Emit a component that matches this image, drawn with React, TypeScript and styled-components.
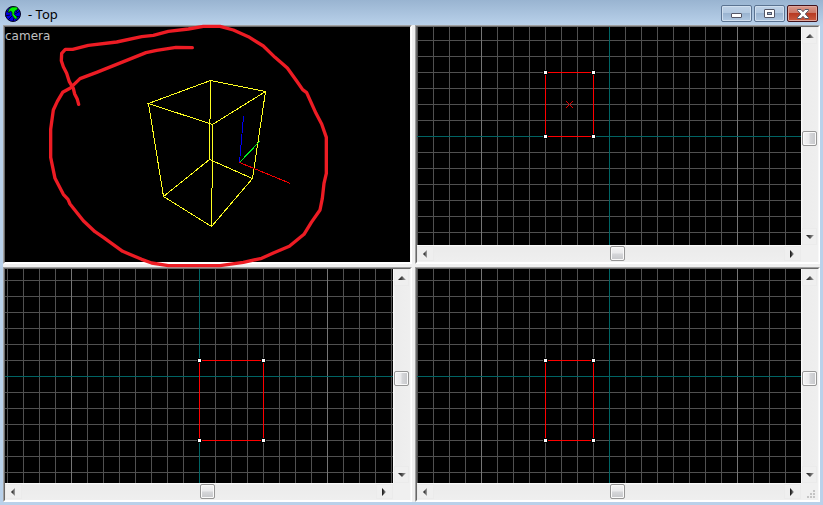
import React from "react";
import styled, { createGlobalStyle, css } from "styled-components";

const GlobalStyle = createGlobalStyle`
  html, body { margin: 0; background: #b9d1ea; }
  * { box-sizing: border-box; }
`;

const Window = styled.main`
  position: relative;
  display: flex;
  flex-direction: column;
  height: 100vh;
  padding: 0 3px 3px;
  overflow: hidden;
  background: linear-gradient(#99b4d1 0, #b9d1ea 25px, #b9d1ea 100%);
  font-family: "Noto Sans", "Open Sans", sans-serif;
`;

const TitleBar = styled.header`
  display: flex;
  align-items: center;
  flex: none;
  height: 25px;
  padding: 2px 2px 0;
`;

const Title = styled.h1`
  flex: 1;
  margin: 0 0 0 7px;
  font-size: 13px;
  font-weight: 400;
  line-height: 20px;
  color: #000;
`;

const CaptionButtons = styled.div`
  display: flex;
  gap: 2px;
`;

const CaptionButton = styled.button<{ $close?: boolean }>`
  display: flex;
  align-items: center;
  justify-content: center;
  width: 31px;
  height: 17px;
  padding: 0;
  border: 1px solid ${(p) => (p.$close ? "#43131b" : "#5b7391")};
  border-radius: 2px;
  box-shadow: inset 0 0 0 1px ${(p) => (p.$close ? "#e0a79c" : "#d0dfef")};
  background: ${(p) =>
    p.$close
      ? "linear-gradient(#d99a8c 0, #cb7766 45%, #b83a22 50%, #c95b40 100%)"
      : "linear-gradient(#bfd2e7 0, #b3c9e1 45%, #9ab4d0 50%, #b0c8e2 100%)"};
`;

const Workspace = styled.div`
  display: grid;
  flex: 1;
  min-height: 0;
  grid-template-columns: 409fr 405fr;
  grid-template-rows: 239fr 235fr;
  gap: 3px;
  background: #f0f0f0;
`;

const Panel = styled.section`
  display: flex;
  min-width: 0;
  min-height: 0;
  border: 1px solid;
  border-color: #a0a0a0 #fff #fff #a0a0a0;
`;

const PanelInner = styled.div`
  flex: 1;
  min-width: 0;
  border: 1px solid;
  border-color: #696969 #f8f8f8 #fff #696969;
  background: #f0f0f0;
`;

const CameraInner = styled(PanelInner)`
  position: relative;
  background: #000;
`;

const CameraLabel = styled.h2`
  position: absolute;
  top: 2px;
  left: 0;
  margin: 0;
  font: 400 12px/15px "DejaVu Sans", sans-serif;
  color: #c0c0c0;
`;

const ScrollInner = styled(PanelInner)`
  display: grid;
  grid-template-columns: 1fr 17px;
  grid-template-rows: 1fr 17px;
`;

const Drawing = styled.svg`
  display: block;
  width: 100%;
  height: 100%;
  min-width: 0;
  min-height: 0;
  overflow: hidden;
  background: #000;
`;

const Bar = styled.div<{ $vertical?: boolean }>`
  display: flex;
  min-width: 0;
  min-height: 0;
  ${(p) =>
    p.$vertical
      ? css`
          flex-direction: column;
          padding: 0 1px 0 1px;
          background: linear-gradient(90deg, #fff 0, #ececec 2px, #efefef 100%);
        `
      : css`
          padding: 1px 0;
          background: linear-gradient(#fff 0, #ebebeb 2px, #efefef 100%);
        `}
`;

const Arrow = styled.button<{ $vertical?: boolean }>`
  display: flex;
  align-items: center;
  justify-content: center;
  flex: none;
  width: ${(p) => (p.$vertical ? "100%" : "17px")};
  height: ${(p) => (p.$vertical ? "17px" : "100%")};
  padding: ${(p) => (p.$vertical ? "0 0 0 1px" : "0 1px 0 0")};
  border: 1px solid #ebebeb;
  background: #efefef;
`;

const Track = styled.div<{ $grow: number }>`
  flex: ${(p) => p.$grow} 1 0;
`;

const Thumb = styled.div<{ $vertical?: boolean }>`
  flex: none;
  width: ${(p) => (p.$vertical ? "100%" : "15px")};
  height: 15px;
  border: 1px solid #969696;
  border-radius: 2px;
  box-shadow: inset 0 0 0 1px #fafafa;
  background: linear-gradient(
    ${(p) => (p.$vertical ? "90deg" : "180deg")},
    #f4f4f4 0,
    #e9e9eb 48%,
    #d6d7da 52%,
    #c6c7ca 100%
  );
`;

const Corner = styled.div`
  display: flex;
  align-items: flex-end;
  justify-content: flex-end;
  padding: 0 3px 2px 0;
`;

type Direction = "up" | "down" | "left" | "right";

const arrowPaths: Record<Direction, string> = {
  up: "M0 4 L4 0 L8 4Z",
  down: "M0 0 H8 L4 4Z",
  left: "M4 0 V8 L0 4Z",
  right: "M0 0 L4 4 L0 8Z",
};

function ArrowIcon({ direction }: { direction: Direction }) {
  const upright = direction === "up" || direction === "down";
  const id = React.useId();
  return (
    <svg width={upright ? 8 : 4} height={upright ? 4 : 8} aria-hidden="true">
      <linearGradient id={id}>
        <stop offset="0" stopColor="#151515" />
        <stop offset="0.4" stopColor="#404040" />
        <stop offset="1" stopColor="#a8a8a8" />
      </linearGradient>
      <path d={arrowPaths[direction]} fill={`url(#${id})`} />
    </svg>
  );
}

function ScrollBar({ vertical, before, label }: { vertical?: boolean; before: number; label: string }) {
  return (
    <Bar
      $vertical={vertical}
      role="scrollbar"
      aria-label={label}
      aria-orientation={vertical ? "vertical" : "horizontal"}
      aria-valuenow={before / 10}
    >
      <Arrow $vertical={vertical} aria-label={vertical ? "Scroll up" : "Scroll left"}>
        <ArrowIcon direction={vertical ? "up" : "left"} />
      </Arrow>
      <Track $grow={before} />
      <Thumb $vertical={vertical} />
      <Track $grow={1000 - before} />
      <Arrow $vertical={vertical} aria-label={vertical ? "Scroll down" : "Scroll right"}>
        <ArrowIcon direction={vertical ? "down" : "right"} />
      </Arrow>
    </Bar>
  );
}

interface ViewProps {
  name: string;
  originX: number;
  originY: number;
  box: { x: number; y: number; width: number; height: number };
  center?: boolean;
  grip?: boolean;
}

function GridView({ name, originX, originY, box, center, grip }: ViewProps) {
  const id = React.useId();
  const corners = [
    [box.x, box.y],
    [box.x + box.width, box.y],
    [box.x, box.y + box.height],
    [box.x + box.width, box.y + box.height],
  ];
  const cx = box.x + box.width / 2;
  const cy = box.y + box.height / 2;
  return (
    <Panel aria-label={name}>
      <ScrollInner>
        <Drawing shapeRendering="crispEdges" role="img" aria-label={`${name} grid`}>
          <defs>
            <pattern id={`${id}m`} x={originX} y={originY} width="16" height="16" patternUnits="userSpaceOnUse">
              <path d="M0 0H16V1H1V16H0Z" fill="#505050" />
            </pattern>
            <pattern id={`${id}b`} x={originX} y={originY} width="128" height="128" patternUnits="userSpaceOnUse">
              <path d="M0 0H128V1H1V128H0Z" fill="#757575" />
            </pattern>
          </defs>
          <rect width="100%" height="100%" fill={`url(#${id}m)`} />
          <rect width="100%" height="100%" fill={`url(#${id}b)`} />
          <rect x={originX} width="1" height="100%" fill="#006464" />
          <rect y={originY} width="100%" height="1" fill="#006464" />
          <g transform="translate(0.5 0.5)">
            <rect {...box} fill="none" stroke="#f00" />
            {center && (
              <path
                d={`M${cx - 3} ${cy - 3}l6 6M${cx + 3} ${cy - 3}l-6 6`}
                stroke="#e00000"
                strokeLinecap="square"
              />
            )}
          </g>
          {corners.map(([x, y]) => (
            <g key={`${x}-${y}`}>
              <rect x={x - 2} y={y - 2} width="5" height="5" fill="#000" />
              <rect x={x - 1} y={y - 1} width="3" height="3" fill="#fff" />
            </g>
          ))}
        </Drawing>
        <ScrollBar vertical before={515} label={`${name} vertical`} />
        <ScrollBar before={525} label={`${name} horizontal`} />
        <Corner>
          {grip && (
            <svg width="8" height="8" aria-hidden="true">
              <path d="M6 0h2v2H6zM3 3h2v2H3zM6 3h2v2H6zM0 6h2v2H0zM3 6h2v2H3zM6 6h2v2H6z" fill="#c4c4c4" />
            </svg>
          )}
        </Corner>
      </ScrollInner>
    </Panel>
  );
}

function CameraView() {
  return (
    <Panel aria-label="Camera">
      <CameraInner>
        <CameraLabel>camera</CameraLabel>
        <Drawing shapeRendering="crispEdges" fill="none" role="img" aria-label="Wireframe box">
          <g transform="translate(0.5 0.5)">
            <path
              stroke="#ffff20"
              d="M143 76L205 53L260 64L207 97ZL158 169L206 199L247 151L260 64M205 53L204 132L158 169M204 132L247 151M207 97V123L206 199"
            />
            <path stroke="#0000f0" d="M234 135L238 89" />
            <path stroke="#00f020" d="M234 135L254 114" />
            <path stroke="#f00000" d="M234 135L285 156" />
          </g>
        </Drawing>
      </CameraInner>
    </Panel>
  );
}

const Scribble = styled.svg`
  position: absolute;
  top: 20px;
  left: 40px;
  pointer-events: none;
`;

function Annotation() {
  return (
    <Scribble width="300" height="250" viewBox="0 0 900 750" aria-hidden="true">
      <polyline
        fill="none"
        stroke="#ed1c24"
        strokeWidth="10"
        strokeLinecap="round"
        strokeLinejoin="round"
        points="116,253 112,238 104,222 100,205 88,185 80,160 70,140 64,122 65,100 76,88 98,88 145,76 230,66 305,50 340,46 385,34 445,27 490,19 540,19 580,30 625,50 670,78 705,112 742,144 770,183 788,209 800,218 828,280 845,312 859,352 859,460 852,490 847,535 840,570 814,607 792,643 748,679 700,699 665,715 610,727 540,737 385,737 335,729 305,718 248,694 190,652 165,635 130,602 90,552 84,538 70,523 45,475 32,412 32,328 40,270 52,244 68,217 90,205 120,176 170,157 318,98 350,91 408,82 457,83"
      />
    </Scribble>
  );
}

function AppIcon() {
  return (
    <svg width="16" height="16" viewBox="0 0 16 16" aria-hidden="true">
      <circle cx="8" cy="8" r="7.5" fill="#0000e8" stroke="#050520" />
      <path d="M1 5L5 7M0 10L5 9M3 14L7 10M8 15L9 12M10 8L15 5M10 10L15 11M11 6L13 3" stroke="#000030" />
      <path
        d="M3 6L4 3L7 1H12L13 3L10 5L9 8L12 11V13H10L7 9V6L5 5L4 7Z"
        fill="#00f000"
        stroke="#001c10"
        strokeWidth="0.7"
      />
    </svg>
  );
}

export default function App() {
  return (
    <Window>
      <GlobalStyle />
      <TitleBar>
        <AppIcon />
        <Title>- Top</Title>
        <CaptionButtons>
          <CaptionButton aria-label="Minimize">
            <svg width="12" height="9" aria-hidden="true">
              <rect x="0.5" y="4.5" width="10" height="4" rx="0.5" fill="#fff" stroke="#535666" />
            </svg>
          </CaptionButton>
          <CaptionButton aria-label="Restore">
            <svg width="11" height="9" aria-hidden="true">
              <rect x="0.5" y="0.5" width="10" height="8" rx="0.5" fill="#fff" stroke="#535666" />
              <rect x="3.5" y="3.5" width="4" height="2" fill="#9eb6d2" stroke="#535666" />
            </svg>
          </CaptionButton>
          <CaptionButton $close aria-label="Close">
            <svg width="12" height="10" viewBox="0 0 12 10" aria-hidden="true">
              <path
                d="M0.5 0.5H4L6 2.7L8 0.5H11.5V1.5L8.3 5L11.5 8.5V9.5H8L6 7.3L4 9.5H0.5V8.5L3.7 5L0.5 1.5Z"
                fill="#fff"
                stroke="#535666"
              />
            </svg>
          </CaptionButton>
        </CaptionButtons>
      </TitleBar>
      <Workspace>
        <CameraView />
        <GridView name="Top" originX={192} originY={109} box={{ x: 128, y: 45, width: 48, height: 64 }} center />
        <GridView name="Front" originX={194} originY={107} box={{ x: 194, y: 91, width: 64, height: 80 }} />
        <GridView name="Side" originX={192} originY={107} box={{ x: 128, y: 91, width: 48, height: 80 }} grip />
      </Workspace>
      <Annotation />
    </Window>
  );
}
